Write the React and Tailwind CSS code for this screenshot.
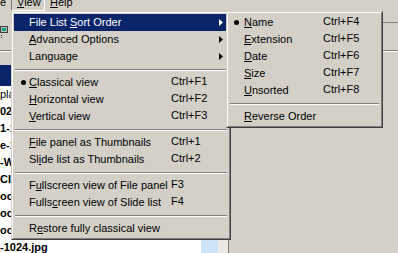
const Mn = ({ text, u }) => {
    if (u < 0) return <span>{text}</span>;
    return (
        <span>
            {text.slice(0, u)}
            <span className="underline underline-offset-[1px]">{text[u]}</span>
            {text.slice(u + 1)}
        </span>
    );
};

const Sep = () => (
    <div className="h-[9px] flex flex-col justify-center px-[1px]">
        <div className="h-px bg-[#808080]" />
        <div className="h-px bg-white" />
    </div>
);

const Item = ({ text, u = 0, shortcut, bullet, arrow, active, keyX, dot = 7 }) => (
    <div
        className={`relative h-[17px] flex items-center pl-[15px] ${active ? 'bg-[#0a246a] text-white' : 'text-black'}`}
    >
        {bullet && (
            <span
                className={`absolute top-[6px] w-[5px] h-[5px] rounded-full ${active ? 'bg-white' : 'bg-black'}`}
                style={{ left: dot }}
            />
        )}
        <Mn text={text} u={u} />
        {shortcut && (
            <span className="absolute top-[1px]" style={{ left: keyX }}>
                {shortcut}
            </span>
        )}
        {arrow && (
            <svg className="absolute right-[5px] top-[5px]" width="4" height="7" viewBox="0 0 4 7">
                <path d="M0 0 L4 3.5 L0 7 Z" fill={active ? '#fff' : '#000'} />
            </svg>
        )}
    </div>
);

const Menu = ({ className, children }) => (
    <div className={`absolute bg-[#d4d0c8] border border-t-[#d4d0c8] border-l-[#d4d0c8] border-r-[#404040] border-b-[#404040] ${className}`}>
        <div className="h-full border border-t-white border-l-white border-r-[#808080] border-b-[#808080] p-[1px]">
            {children}
        </div>
    </div>
);

const files = [
    { t: 'placeholder.jpg', b: false },
    { t: '02-1024.jpg', b: true },
    { t: '1-1024.jpg', b: true },
    { t: 'e-1024.jpg', b: true },
    { t: '-W1024.jpg', b: true },
    { t: 'CI-1024.jpg', b: true },
    { t: 'oc-1024.jpg', b: true },
    { t: 'oc-1025.jpg', b: true },
    { t: 'oc-1026.jpg', b: true },
    { t: '-1024.jpg', b: true },
];

export default function App() {
    return (
        <div
            className="relative w-[398px] h-[253px] overflow-hidden bg-[#d4d0c8] text-[11px] leading-[13px] text-black"
            style={{ fontFamily: '"Liberation Sans", Arial, sans-serif' }}
        >
            {/* menubar */}
            <div className="h-[11px] flex items-end">
                <div className="h-[11px] w-[11px] overflow-hidden">
                    <div className="-mt-[4px]">e</div>
                </div>
                <div className="h-[11px] w-[34px] border-r border-b border-r-white border-b-white border-l border-l-[#808080] overflow-hidden">
                    <div className="-mt-[4px] pl-[5px]">
                        <Mn text="View" u={0} />
                    </div>
                </div>
                <div className="h-[11px] overflow-hidden pl-[5px]">
                    <div className="-mt-[4px]">
                        <Mn text="Help" u={0} />
                    </div>
                </div>
            </div>

            {/* toolbar */}
            <div className="h-[40px] border-b border-[#808080] flex flex-col pt-[15px]">
                <svg width="9" height="12" viewBox="0 0 9 12">
                    <rect x="0.5" y="0.5" width="7" height="6" fill="#c0c0c0" stroke="#404040" />
                    <rect x="2" y="2" width="4" height="3" fill="#00a080" />
                    <rect x="1" y="9" width="1" height="1" fill="#404040" />
                    <rect x="1" y="11" width="1" height="1" fill="#404040" />
                </svg>
            </div>
            <div className="h-px bg-white" />

            {/* panels */}
            <div className="flex">
                <div className="w-[229px] border-r border-[#808080] flex flex-col pt-[13px]">
                    <div className="h-[21px] bg-[#0a246a]" />
                    <div className="bg-white flex">
                        <div className="flex-1 flex flex-col">
                            {files.map((f) => (
                                <div key={f.t} className={`h-[17px] flex items-center whitespace-nowrap ${f.b ? 'font-bold' : ''}`}>
                                    {f.t}
                                </div>
                            ))}
                        </div>
                        <div className="w-[17px] flex flex-col justify-end">
                            <div className="h-[17px] bg-[#cce4f7]" />
                        </div>
                        <div className="w-[10px] bg-[#ece9e4]" />
                    </div>
                </div>
                <div className="flex-1" />
            </div>

            {/* background line behind submenu */}
            <div className="absolute left-[383px] top-[22px] w-[15px] h-px bg-[#808080]" />

            {/* main menu */}
            <Menu className="left-[11px] top-[11px] w-[220px] h-[229px]">
                <Item text="File List Sort Order" u={10} arrow active />
                <Item text="Advanced Options" u={0} arrow />
                <Item text="Language" u={-1} arrow />
                <Sep />
                <Item text="Classical view" bullet shortcut="Ctrl+F1" keyX={157} />
                <Item text="Horizontal view" shortcut="Ctrl+F2" keyX={157} />
                <Item text="Vertical view" shortcut="Ctrl+F3" keyX={157} />
                <Sep />
                <Item text="File panel as Thumbnails" shortcut="Ctrl+1" keyX={157} />
                <Item text="Slide list as Thumbnails" u={2} shortcut="Ctrl+2" keyX={157} />
                <Sep />
                <Item text="Fullscreen view of File panel" u={1} shortcut="F3" keyX={157} />
                <Item text="Fullscreen view of Slide list" u={5} shortcut="F4" keyX={157} />
                <Sep />
                <Item text="Restore fully classical view" u={1} />
            </Menu>

            {/* submenu */}
            <Menu className="left-[226px] top-[11px] w-[157px] h-[117px]">
                <Item text="Name" bullet dot={5} shortcut="Ctrl+F4" keyX={94} />
                <Item text="Extension" shortcut="Ctrl+F5" keyX={94} />
                <Item text="Date" shortcut="Ctrl+F6" keyX={94} />
                <Item text="Size" shortcut="Ctrl+F7" keyX={94} />
                <Item text="Unsorted" shortcut="Ctrl+F8" keyX={94} />
                <Sep />
                <Item text="Reverse Order" />
            </Menu>
        </div>
    );
}
